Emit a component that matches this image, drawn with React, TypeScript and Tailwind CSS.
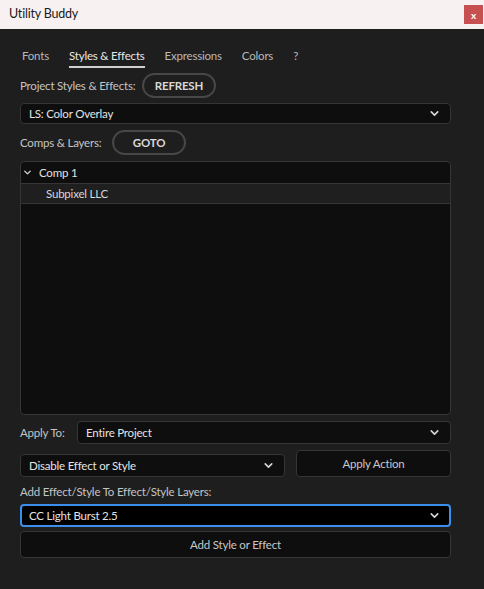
import { ChevronDown } from "lucide-react";

const font = { fontFamily: "Lato, 'Noto Sans', sans-serif" };

function Select({ value, className = "", active = false }: { value: string; className?: string; active?: boolean }) {
    return (
        <div
            className={`flex items-center justify-between rounded-[4px] text-[11.5px] tracking-[-0.2px] text-[#e4e4e4] ${
                active ? "border-2 border-[#3b8eea] bg-black pl-[7px] pr-[8px]" : "border border-[#353535] bg-[#0e0e0e] pl-[8px] pr-[9px]"
            } ${className}`}
        >
            <span>{value}</span>
            <ChevronDown size={13} strokeWidth={3} className="text-[#d6d6d6]" />
        </div>
    );
}

function PillButton({ label, className = "" }: { label: string; className?: string }) {
    return (
        <div
            className={`flex h-[25px] w-[74px] items-center justify-center rounded-full border-2 border-[#474747] text-[11.5px] font-bold text-[#d8d8d8] ${className}`}
        >
            {label}
        </div>
    );
}

export default function App() {
    const tabs = ["Fonts", "Styles & Effects", "Expressions", "Colors", "?"];

    return (
        <div className="flex h-[589px] w-[484px] flex-col bg-[#1e1e1e]" style={font}>
            {/* Title bar */}
            <div className="flex h-[29px] items-center justify-between bg-[#f7f1f1] pl-[9px] pr-[1px]">
                <span className="text-[12.5px] tracking-[-0.2px] text-[#1a1a1a]">Utility Buddy</span>
                <div className="flex h-[19px] w-[19px] items-center justify-center bg-[#c75050] pt-[1px] text-[10px] font-bold text-white">
                    x
                </div>
            </div>

            <div className="flex flex-col pl-[20px] pr-[33px] text-[11.5px] tracking-[-0.2px]">
                {/* Tabs */}
                <div className="mt-[18px] flex gap-[20px] pl-[2px]">
                    {tabs.map((t, i) => (
                        <div
                            key={t}
                            className={`flex h-[21px] items-center border-b-2 pb-[1px] ${
                                i === 1 ? "border-[#cfcfcf] text-[#e8e8e8]" : "border-transparent text-[#b9b9b9]"
                            }`}
                        >
                            {t}
                        </div>
                    ))}
                </div>

                {/* Project styles */}
                <div className="mt-[5px] flex items-center">
                    <span className="w-[122px] text-[#c4c4c4]">Project Styles &amp; Effects:</span>
                    <PillButton label="REFRESH" />
                </div>

                <Select value="LS: Color Overlay" className="mt-[5px] h-[21px]" />

                {/* Comps & layers */}
                <div className="mt-[6px] flex items-center">
                    <span className="w-[92px] text-[#c4c4c4]">Comps &amp; Layers:</span>
                    <PillButton label="GOTO" />
                </div>

                {/* Tree */}
                <div className="mt-[6px] flex h-[254px] flex-col overflow-hidden rounded-[4px] border border-[#353535] bg-[#0e0e0e]">
                    <div className="flex h-[21px] items-center gap-[6px] pl-[1px] text-[#e0e0e0]">
                        <ChevronDown size={11} strokeWidth={3} className="text-[#d6d6d6]" />
                        <span>Comp 1</span>
                    </div>
                    <div className="flex h-[21px] items-center border-y border-[#353535] bg-[#1f1f1f] pl-[25px] text-[#d8d8d8]">
                        Subpixel LLC
                    </div>
                </div>

                {/* Apply to */}
                <div className="mt-[6px] flex items-center">
                    <span className="w-[57px] text-[#c4c4c4]">Apply To:</span>
                    <Select value="Entire Project" className="h-[23px] flex-1" />
                </div>

                <div className="mt-[6px] flex items-end">
                    <Select value="Disable Effect or Style" className="h-[23px] w-[265px]" />
                    <div className="ml-[11px] flex h-[27px] flex-1 items-center justify-center rounded-[4px] border border-[#353535] bg-[#0e0e0e] text-[#c8c8c8]">
                        Apply Action
                    </div>
                </div>

                <span className="mt-[7px] h-[16px] leading-[16px] text-[#c4c4c4]">
                    Add Effect/Style To Effect/Style Layers:
                </span>

                <Select value="CC Light Burst 2.5" active className="mt-[4px] h-[23px]" />

                <div className="mt-[4px] flex h-[27px] items-center justify-center rounded-[4px] border border-[#353535] bg-[#0e0e0e] text-[#c8c8c8]">
                    Add Style or Effect
                </div>
            </div>
        </div>
    );
}
